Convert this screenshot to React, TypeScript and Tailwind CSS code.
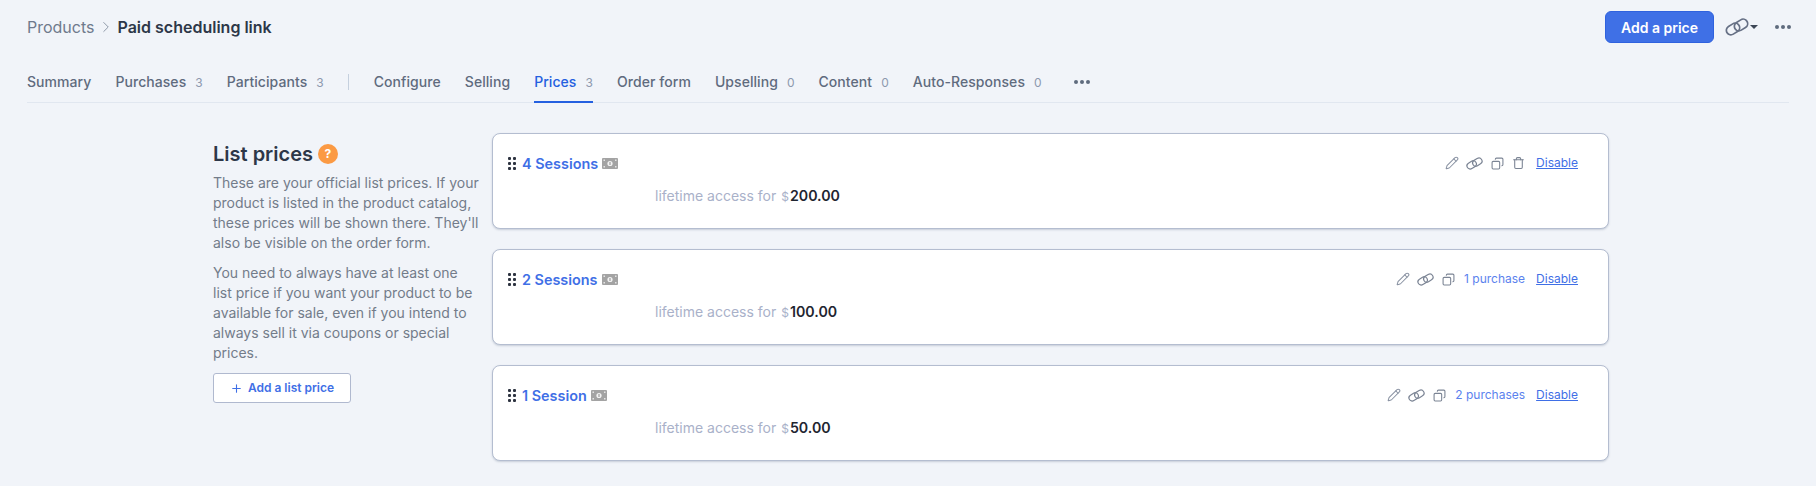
import { Plus, Copy, Trash, Pencil, ChevronRight } from 'lucide-react'

const tabs = [
  { label: 'Summary' },
  { label: 'Purchases', count: 3 },
  { label: 'Participants', count: 3, divider: true },
  { label: 'Configure' },
  { label: 'Selling' },
  { label: 'Prices', count: 3, active: true },
  { label: 'Order form' },
  { label: 'Upselling', count: 0 },
  { label: 'Content', count: 0 },
  { label: 'Auto-Responses', count: 0 },
]

const prices = [
  { name: '4 Sessions', amount: '200.00', canDelete: true },
  { name: '2 Sessions', amount: '100.00', purchases: '1 purchase' },
  { name: '1 Session', amount: '50.00', purchases: '2 purchases' },
]

function LinkIcon({ className }: { className?: string }) {
  return (
    <svg viewBox="0 0 24 18" fill="none" stroke="currentColor" strokeWidth="1.7" className={className}>
      <rect x="1" y="6.5" width="14" height="9" rx="4.5" transform="rotate(-32 8 11)" />
      <rect x="9" y="2.5" width="14" height="9" rx="4.5" transform="rotate(-32 16 7)" />
    </svg>
  )
}

function Dots() {
  return (
    <div className="flex gap-[2px]">
      <span className="w-[4px] h-[4px] rounded-full bg-[#5f6b7e]" />
      <span className="w-[4px] h-[4px] rounded-full bg-[#5f6b7e]" />
      <span className="w-[4px] h-[4px] rounded-full bg-[#5f6b7e]" />
    </div>
  )
}

function Grip() {
  return (
    <div className="grid grid-cols-2 gap-x-[2px] gap-y-[2px] w-[8px] mr-[6px]">
      {[0, 1, 2, 3, 4, 5].map((i) => (
        <span key={i} className="w-[3px] h-[3px] rounded-[1px] bg-[#2d3340]" />
      ))}
    </div>
  )
}

function Money() {
  return (
    <svg viewBox="0 0 16 11" className="w-[16px] h-[11px] ml-[4px]">
      <rect width="16" height="11" rx="1" fill="#a3a3a3" />
      <circle cx="8" cy="5.5" r="2.6" fill="#f2f2f2" />
      <rect x="7.5" y="4" width="1" height="3" fill="#8a8a8a" />
      <rect x="1.5" y="1.5" width="1.5" height="1.5" fill="#e5e5e5" />
      <rect x="13" y="1.5" width="1.5" height="1.5" fill="#e5e5e5" />
      <rect x="1.5" y="8" width="1.5" height="1.5" fill="#e5e5e5" />
      <rect x="13" y="8" width="1.5" height="1.5" fill="#e5e5e5" />
    </svg>
  )
}

export default function App() {
  return (
    <div
      className="w-[1816px] h-[486px] overflow-hidden bg-[#f1f4f9] px-[27px]"
      style={{ fontFamily: 'Inter, "Noto Sans", sans-serif' }}
    >
      <div className="flex items-center justify-between h-[54px]">
        <div className="flex items-center text-[16px]">
          <span className="text-[#6f7a8c]">Products</span>
          <ChevronRight className="w-[18px] h-[18px] ml-[2px] mr-[3px] text-[#8792a2]" strokeWidth={1.25} />
          <span className="font-semibold text-[#2d3748]">Paid scheduling link</span>
        </div>
        <div className="flex items-center">
          <button className="h-[32px] w-[109px] rounded-[6px] bg-[#3f70e6] border border-[#2f62de] text-white text-[14px] font-semibold">
            Add a price
          </button>
          <LinkIcon className="w-[24px] h-[18px] ml-[11px] text-[#667085]" />
          <span className="ml-[1px] border-x-[4px] border-x-transparent border-t-[4px] border-t-[#3d4656]" />
          <div className="ml-[17px] -mr-[2px]">
            <Dots />
          </div>
        </div>
      </div>

      <div className="flex items-center h-[49px] border-b border-[#e1e7f0]">
        {tabs.map((tab) => (
          <div key={tab.label} className="flex items-center h-full">
            <div
              className={`relative flex items-center h-full pt-[7px] mr-[24px] text-[14px] tracking-[0.06px] font-medium ${tab.active ? 'text-[#2460e0]' : 'text-[#5f6b7e]'}`}
            >
              {tab.label}
              {tab.count !== undefined && (
                <span className="ml-[9px] text-[12px] font-normal text-[#8d99ae] mt-[2px]">{tab.count}</span>
              )}
              {tab.active && <span className="absolute left-0 right-0 bottom-[-1px] h-[2px] bg-[#2460e0]" />}
            </div>
            {tab.divider && <span className="w-[1px] h-[16px] mt-[7px] bg-[#c5d0de] mr-[25px]" />}
          </div>
        ))}
        <div className="mt-[7px] ml-[8px]">
          <Dots />
        </div>
      </div>

      <div className="flex mt-[30px] pl-[186px]">
        <div className="w-[266px] mr-[13px] shrink-0">
          <div className="flex items-center h-[32px] mt-[5px] mb-[3px]">
            <h2 className="text-[20px] font-semibold text-[#2d3748]">List prices</h2>
            <span className="ml-[5px] flex items-center justify-center w-[20px] h-[20px] rounded-full bg-[#fb9a44] text-white text-[12px] font-bold">
              ?
            </span>
          </div>
          <p className="text-[14px] leading-[20px] text-[#737c8a] w-[266px]">
            These are your official list prices. If your product is listed in the product catalog, these prices will be
            shown there. They'll also be visible on the order form.
          </p>
          <p className="mt-[10px] text-[14px] leading-[20px] text-[#737c8a] w-[266px]">
            You need to always have at least one list price if you want your product to be available for sale, even if
            you intend to always sell it via coupons or special prices.
          </p>
          <button className="mt-[10px] flex items-center justify-center w-[138px] h-[30px] bg-white border border-[#b0b9cf] rounded-[3px] text-[12px] font-semibold text-[#3f6fe6]">
            <Plus className="w-[13px] h-[13px] mr-[5px]" />
            Add a list price
          </button>
        </div>

        <div className="flex flex-col gap-[20px] w-[1117px]">
          {prices.map((price) => (
            <div
              key={price.name}
              className="h-[96px] bg-white border border-[#b4bdd0] rounded-[8px] shadow-[0_1px_2px_rgba(100,116,139,0.3)] pl-[15px] pr-[30px] pt-[19px]"
            >
              <div className="flex items-center justify-between h-[20px]">
                <div className="flex items-center mt-[1px]">
                  <Grip />
                  <span className="text-[14.4px] font-semibold text-[#3f6fe6]">{price.name}</span>
                  <Money />
                </div>
                <div className="flex items-center text-[#7b8494]">
                  <Pencil className="w-[14px] h-[14px] text-[#8a93a3]" strokeWidth={1.75} />
                  <LinkIcon className="w-[17px] h-[13px] ml-[7px]" />
                  <Copy className="w-[13px] h-[13px] ml-[8px] -scale-x-100" strokeWidth={2} />
                  {price.canDelete && <Trash className="w-[13px] h-[14px] ml-[8px]" strokeWidth={2} />}
                  {price.purchases && (
                    <span className="ml-[9px] text-[12px] text-[#5b82ee]">{price.purchases}</span>
                  )}
                  <a className="ml-[11px] text-[12px] text-[#3f6fe6] underline">Disable</a>
                </div>
              </div>
              <div className="flex items-baseline mt-[12px] pl-[147px]">
                <span className="text-[14px] text-[#a9b1c9]">lifetime access for</span>
                <span className="ml-[5px] mr-[1px] text-[12px] text-[#a9b1c9]">$</span>
                <span className="text-[14.2px] font-semibold text-[#1f2530]">{price.amount}</span>
              </div>
            </div>
          ))}
        </div>
      </div>
    </div>
  )
}
